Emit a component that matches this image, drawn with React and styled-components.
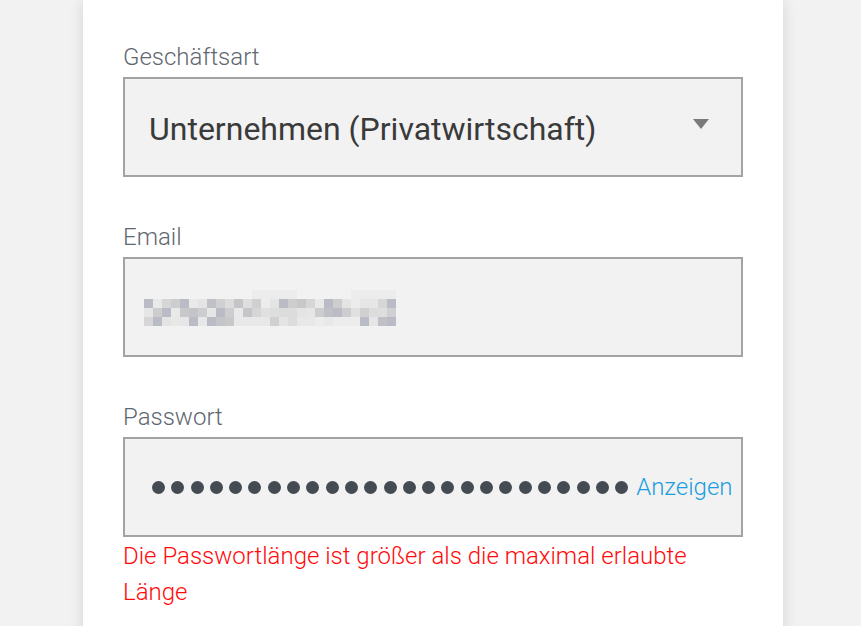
import React from "react";
import styled, { createGlobalStyle } from "styled-components";

const Global = createGlobalStyle`
  html, body { margin: 0; padding: 0; background: #f2f2f2; }
  body { font-family: Roboto, "Liberation Sans", sans-serif; overflow: hidden; }
`;

const Page = styled.div`
  width: 861px;
  height: 626px;
  display: flex;
  justify-content: flex-start;
  padding-left: 83px;
  box-sizing: border-box;
  overflow: hidden;
`;

const Card = styled.div`
  width: 700px;
  min-height: 700px;
  background: #fff;
  box-shadow: 0 0 14px rgba(0, 0, 0, 0.12);
  padding: 39px 40px 0;
  box-sizing: border-box;
`;

const Field = styled.div`
  margin-bottom: ${(p) => (p.$last ? 0 : 42)}px;
`;

const Label = styled.div`
  font-size: 24px;
  font-weight: 300;
  line-height: 36px;
  color: #5f6770;
  margin-bottom: 2px;
`;

const Box = styled.div`
  height: 100px;
  box-sizing: border-box;
  border: 2px solid #a3a3a3;
  background: #f2f2f2;
  display: flex;
  align-items: center;
  padding: ${(p) => p.$pad || "0 24px"};
  gap: ${(p) => p.$gap || 0}px;
`;

const SelectText = styled.div`
  flex: 1;
  font-size: 32px;
  font-weight: 400;
  color: #3a3a3a;
  padding-top: 4px;
`;

const Caret = styled.div`
  width: 0;
  height: 0;
  border-left: 8px solid transparent;
  border-right: 8px solid transparent;
  border-top: 10px solid #7a7a7a;
  margin-right: 8px;
  margin-top: -6px;
`;

const Dots = styled.div`
  display: flex;
  gap: 6.3px;
`;

const Dot = styled.span`
  width: 13px;
  height: 13px;
  border-radius: 50%;
  background: #454b53;
`;

const ShowLink = styled.span`
  font-size: 24px;
  font-weight: 300;
  color: #1a9ee0;
  margin-top: -1px;
`;

const Error = styled.div`
  font-size: 24px;
  font-weight: 300;
  line-height: 36px;
  color: #ff0a0a;
  width: 600px;
  margin-top: 1px;
`;

const Mosaic = styled.svg`
  display: block;
  margin-top: 2px;
`;

function MosaicImg() {
  const cols = 28;
  const size = 9;
  const palette = [
    "#e4e4e4", "#d6d6d6", "#cdcdcf", "#c3c5c9", "#dcdcdc", "#b9bcc4",
    "#e9e9e9", "#d0d0d2", "#c8c8c8", "#dedede", "#bfc1c6", "#e6e6e6",
  ];
  const rects = [];
  let seed = 7;
  const rnd = () => {
    seed = (seed * 9301 + 49297) % 233280;
    return seed / 233280;
  };
  for (let c = 0; c < cols; c++) {
    if ((c >= 12 && c <= 16) || (c >= 23 && c <= 27)) {
      rects.push(
        <rect key={`t${c}`} x={c * size} y={0} width={size} height={size} fill="#ececec" />
      );
    }
  }
  for (let r = 1; r < 4; r++) {
    for (let c = 0; c < cols; c++) {
      const gapCol = c === 13 || c === 23 || (r === 3 && c >= 18 && c <= 22);
      let fill;
      if (gapCol) fill = r === 2 ? "#e0e0e0" : "#ececec";
      else fill = palette[Math.floor(rnd() * palette.length)];
      if (r === 3 && rnd() > 0.6) fill = "#e8e8e8";
      rects.push(
        <rect key={`${r}-${c}`} x={c * size} y={r * size} width={size} height={size} fill={fill} />
      );
    }
  }
  return (
    <Mosaic width={cols * size} height={4 * size} viewBox={`0 0 ${cols * size} ${4 * size}`}>
      {rects}
    </Mosaic>
  );
}

export default function App() {
  return (
    <>
      <Global />
      <Page>
        <Card>
          <Field>
            <Label>Geschäftsart</Label>
            <Box>
              <SelectText>Unternehmen (Privatwirtschaft)</SelectText>
              <Caret />
            </Box>
          </Field>
          <Field>
            <Label>Email</Label>
            <Box $pad="0 19px">
              <MosaicImg />
            </Box>
          </Field>
          <Field $last>
            <Label>Passwort</Label>
            <Box $pad="0 8px 0 27px" $gap={8}>
              <Dots>
                {Array.from({ length: 25 }).map((_, i) => (
                  <Dot key={i} />
                ))}
              </Dots>
              <ShowLink>Anzeigen</ShowLink>
            </Box>
            <Error>Die Passwortlänge ist größer als die maximal erlaubte Länge</Error>
          </Field>
        </Card>
      </Page>
    </>
  );
}
